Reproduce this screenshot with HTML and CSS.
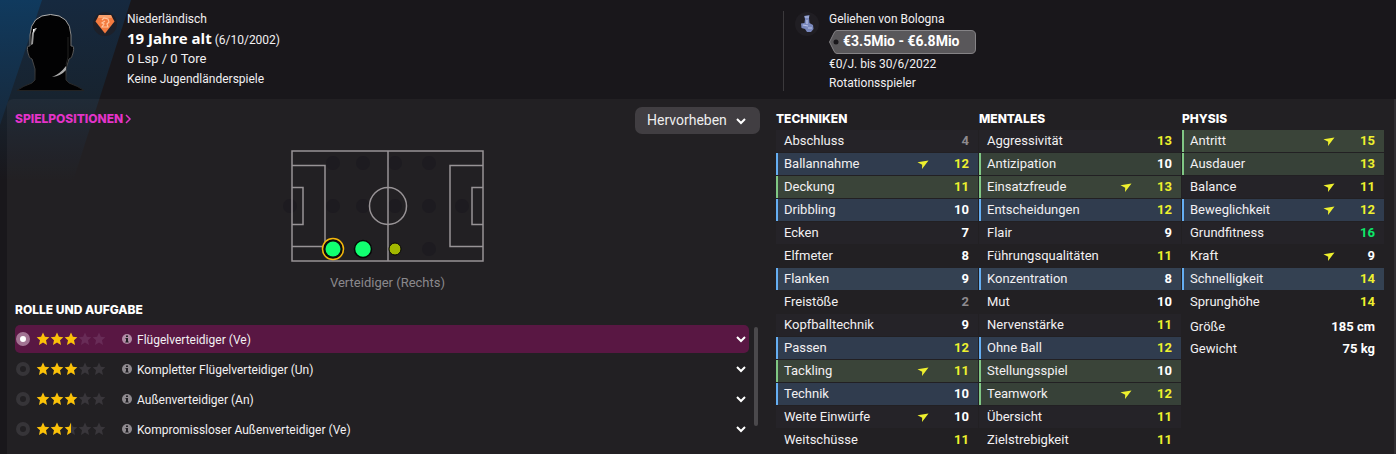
FILE: index.html
```html
<!DOCTYPE html>
<html lang="de">
<head>
    <meta charset="UTF-8">
    <meta name="viewport" content="width=device-width, initial-scale=1.0">
    <title>Spielerprofil</title>
    <link rel="stylesheet" href="styles.css">
</head>
<body>
    <svg class="symbols" aria-hidden="true">
        <symbol id="arrow" viewBox="0 0 12 12"><path d="M0.500 4.200 L11.500 2.500 L5 11 L5.200 6.800 Z"/></symbol>
        <symbol id="chevron" viewBox="0 0 12 12"><path d="M2 4 L6 8 L10 4" fill="none" stroke="#fff" stroke-width="2"/></symbol>
        <symbol id="star" viewBox="0 0 14 14"><path d="M7 .5 L8.900 4.700 L13.300 5.200 L10 8.300 L11 12.900 L7 10.600 L3 12.900 L4 8.300 L.7 5.200 L5.100 4.700 Z"/></symbol>
        <symbol id="half" viewBox="0 0 14 14"><path d="M7 .5 L7 10.600 L3 12.900 L4 8.300 L.7 5.200 L5.100 4.700 Z"/></symbol>
        <symbol id="stars" viewBox="0 0 70 14">
            <use href="#star" width="14" height="14"/><use href="#star" x="14" width="14" height="14"/><use href="#star" x="28" width="14" height="14"/><use href="#star" x="42" width="14" height="14"/><use href="#star" x="56" width="14" height="14"/>
        </symbol>
        <symbol id="info" viewBox="0 0 10 10"><circle cx="5" cy="5" r="5" fill="currentColor"/><path d="M4 1.500h2v1.500H4zM3.500 4H6v3.500h.700v1H3.300v-1H4V5h-.500z" fill="#222025"/></symbol>
    </svg>

    <header class="header">
        <div class="person">
            <svg class="portrait" viewBox="0 0 72 80">
                <defs>
                    <linearGradient id="rim" x1="0" y1="0" x2="0" y2="1">
                        <stop offset="0" stop-color="#b5b5b5"/>
                        <stop offset=".5" stop-color="#555"/>
                        <stop offset="1" stop-color="#222"/>
                    </linearGradient>
                </defs>
                <path d="M2 79.500 Q8 75 17 72 L20 69 L20 58 L17 48 Q14 48 13 42 Q11 34 15 35 L15 24 Q16 4 35.500 3.500 Q55 4 56 24 L56 35 Q60 34 58 42 Q57 48 54 48 L51 58 L51 69 L54 72 Q63 75 69 79.500 Z" fill="#020203" stroke="url(#rim)"/>
                <path d="M17 22 L20 17 L22 17 L19 22 L18 33 L16 34 Z" fill="#999"/>
                <path d="M18 18 L20 18 L18 22 Z" fill="#fff"/>
                <path d="M51 55 L51 59 Q46 65 37 66 Q45 63 51 55 Z" fill="#aaa"/>
                <path d="M53 26 L53 46 L51 54" fill="none" stroke="#222"/>
            </svg>
            <svg class="nation" viewBox="0 0 24 24">
                <circle cx="12" cy="12" r="12" fill="#1d2029"/>
                <path d="M6 3 L18 3 L21.500 9.500 L12 21.500 L2.500 9.500 Z" fill="#f47b3f"/>
                <path d="M6 3 L18 3 L19 6 L5 6 Z" fill="#f9a06c"/>
                <path d="M9 8 L11 6 L15 7 L16 10 L14 12 L15 15 L9 15 L11 12 L9 11 L12 9" fill="none" stroke="#ffc49b" stroke-width="1.200"/>
            </svg>
            <div class="lines">
                <p>Niederländisch</p>
                <p class="age"><strong>19 Jahre alt</strong> (6/10/2002)</p>
                <p class="caps">0 Lsp / 0 Tore</p>
                <p>Keine Jugendländerspiele</p>
            </div>
        </div>
        <div class="contract">
            <svg class="club" viewBox="0 0 24 24">
                <circle cx="12" cy="12" r="12" fill="#201e23"/>
                <path d="M9 4 L14.500 3 L14 6 L14.500 11 L18 13 L18.500 17 L16 20 L12 20 L10 17 L6.500 16 L6 11.500 L9.500 11 L10 7 Z" fill="#7988bd"/>
                <path d="M10 5 L14 5 M8 13 L13 14 M13 16 L17 16 M12 8 V12" stroke="#b9c3e6" stroke-width="1.200"/>
            </svg>
            <div class="lines">
                <p>Geliehen von Bologna</p>
                <div class="price">
                    <svg class="price-tag" viewBox="0 0 147 24" preserveAspectRatio="none">
                        <path d="M8 .5 H142 Q146.500 .5 146.500 5 V19 Q146.500 23.500 142 23.500 H8 Q6 23.500 5 21 L.5 12 L5 3 Q6 .5 8 .5 Z" fill="#59575a" stroke="#858386"/>
                        <circle cx="7" cy="12" r="2.500" fill="#19171b"/>
                    </svg>
                    <strong>€3.5Mio - €6.8Mio</strong>
                </div>
                <p>€0/J. bis 30/6/2022</p>
                <p>Rotationsspieler</p>
            </div>
        </div>
    </header>

    <main class="panel">
        <section class="positions">
            <div class="top">
                <a class="title" href="#">SPIELPOSITIONEN<svg viewBox="0 0 8 10"><path d="M2 1 L6 5 L2 9" fill="none" stroke="currentColor" stroke-width="1.500"/></svg></a>
                <div class="select">
                    <select aria-label="Hervorheben"><option>Hervorheben</option></select>
                    <svg><use href="#chevron"/></svg>
                </div>
            </div>
            <figure class="pitch">
                <svg viewBox="0 0 216 124">
                    <g fill="#1d1b20">
                        <circle cx="10" cy="60" r="7"/>
                        <circle cx="53" cy="17" r="7"/><circle cx="83" cy="17" r="7"/><circle cx="115" cy="17" r="7"/><circle cx="149" cy="17" r="7"/>
                        <circle cx="53" cy="60" r="7"/><circle cx="83" cy="60" r="7"/><circle cx="115" cy="60" r="7"/><circle cx="149" cy="60" r="7"/><circle cx="182" cy="60" r="7"/>
                        <circle cx="149" cy="103" r="7"/>
                    </g>
                    <g fill="none" stroke="#989396" stroke-width="1.500">
                        <rect x="12" y="5" width="191" height="110"/>
                        <path d="M108 5V115M12 19.500H45V100.500H12M12 41.500H23V78.500H12M203 19.500H170V100.500H203M203 41.500H192V78.500H203"/>
                        <circle cx="108" cy="60" r="18.500"/>
                    </g>
                    <circle cx="53" cy="103" r="10.500" fill="#0c0b0d" stroke="#f5b80c" stroke-width="1.500"/>
                    <circle cx="53" cy="103" r="7.500" fill="#11ff70"/>
                    <circle cx="83" cy="103" r="8.500" fill="#11ff70" stroke="#060606" stroke-width="1.500"/>
                    <circle cx="115" cy="103" r="6" fill="#a3b900" stroke="#060606"/>
                </svg>
                <figcaption>Verteidiger (Rechts)</figcaption>
            </figure>

            <h2>ROLLE UND AUFGABE</h2>
            <div class="roles">
                <div class="role-list">
                    <div class="role active">
                        <input type="radio" name="role" id="role1" checked>
                        <svg class="stars" viewBox="0 0 70 14"><use class="off" href="#stars"/><use href="#star" width="14" height="14"/><use href="#star" x="14" width="14" height="14"/><use href="#star" x="28" width="14" height="14"/></svg>
                        <svg class="info"><use href="#info"/></svg>
                        <label for="role1">Flügelverteidiger (Ve)</label>
                        <button aria-label="Aufgabe"><svg><use href="#chevron"/></svg></button>
                    </div>
                    <div class="role">
                        <input type="radio" name="role" id="role2">
                        <svg class="stars" viewBox="0 0 70 14"><use class="off" href="#stars"/><use href="#star" width="14" height="14"/><use href="#star" x="14" width="14" height="14"/><use href="#star" x="28" width="14" height="14"/></svg>
                        <svg class="info"><use href="#info"/></svg>
                        <label for="role2">Kompletter Flügelverteidiger (Un)</label>
                        <button aria-label="Aufgabe"><svg><use href="#chevron"/></svg></button>
                    </div>
                    <div class="role">
                        <input type="radio" name="role" id="role3">
                        <svg class="stars" viewBox="0 0 70 14"><use class="off" href="#stars"/><use href="#star" width="14" height="14"/><use href="#star" x="14" width="14" height="14"/><use href="#star" x="28" width="14" height="14"/></svg>
                        <svg class="info"><use href="#info"/></svg>
                        <label for="role3">Außenverteidiger (An)</label>
                        <button aria-label="Aufgabe"><svg><use href="#chevron"/></svg></button>
                    </div>
                    <div class="role">
                        <input type="radio" name="role" id="role4">
                        <svg class="stars" viewBox="0 0 70 14"><use class="off" href="#stars"/><use href="#star" width="14" height="14"/><use href="#star" x="14" width="14" height="14"/><use href="#half" x="28" width="14" height="14"/></svg>
                        <svg class="info"><use href="#info"/></svg>
                        <label for="role4">Kompromissloser Außenverteidiger (Ve)</label>
                        <button aria-label="Aufgabe"><svg><use href="#chevron"/></svg></button>
                    </div>
                </div>
                <div class="scrollbar"></div>
            </div>
        </section>

        <section class="attributes">
            <div class="group">
                <h2>TECHNIKEN</h2>
                <table>
                    <tr><th>Abschluss</th><td></td><td class="low">4</td></tr>
                    <tr class="blue"><th>Ballannahme</th><td><svg><use href="#arrow"/></svg></td><td class="good">12</td></tr>
                    <tr class="green"><th>Deckung</th><td></td><td class="good">11</td></tr>
                    <tr class="blue"><th>Dribbling</th><td></td><td>10</td></tr>
                    <tr><th>Ecken</th><td></td><td>7</td></tr>
                    <tr><th>Elfmeter</th><td></td><td>8</td></tr>
                    <tr class="blue"><th>Flanken</th><td></td><td>9</td></tr>
                    <tr><th>Freistöße</th><td></td><td class="low">2</td></tr>
                    <tr><th>Kopfballtechnik</th><td></td><td>9</td></tr>
                    <tr class="blue"><th>Passen</th><td></td><td class="good">12</td></tr>
                    <tr class="green"><th>Tackling</th><td><svg><use href="#arrow"/></svg></td><td class="good">11</td></tr>
                    <tr class="blue"><th>Technik</th><td></td><td>10</td></tr>
                    <tr><th>Weite Einwürfe</th><td><svg><use href="#arrow"/></svg></td><td>10</td></tr>
                    <tr><th>Weitschüsse</th><td></td><td class="good">11</td></tr>
                </table>
            </div>
            <div class="group">
                <h2>MENTALES</h2>
                <table>
                    <tr><th>Aggressivität</th><td></td><td class="good">13</td></tr>
                    <tr class="green"><th>Antizipation</th><td></td><td>10</td></tr>
                    <tr class="green"><th>Einsatzfreude</th><td><svg><use href="#arrow"/></svg></td><td class="good">13</td></tr>
                    <tr class="blue"><th>Entscheidungen</th><td></td><td class="good">12</td></tr>
                    <tr><th>Flair</th><td></td><td>9</td></tr>
                    <tr><th>Führungsqualitäten</th><td></td><td class="good">11</td></tr>
                    <tr class="blue"><th>Konzentration</th><td></td><td>8</td></tr>
                    <tr><th>Mut</th><td></td><td>10</td></tr>
                    <tr><th>Nervenstärke</th><td></td><td class="good">11</td></tr>
                    <tr class="blue"><th>Ohne Ball</th><td></td><td class="good">12</td></tr>
                    <tr class="green"><th>Stellungsspiel</th><td></td><td>10</td></tr>
                    <tr class="green"><th>Teamwork</th><td><svg><use href="#arrow"/></svg></td><td class="good">12</td></tr>
                    <tr><th>Übersicht</th><td></td><td class="good">11</td></tr>
                    <tr><th>Zielstrebigkeit</th><td></td><td class="good">11</td></tr>
                </table>
            </div>
            <div class="group">
                <h2>PHYSIS</h2>
                <table>
                    <tr class="green"><th>Antritt</th><td><svg><use href="#arrow"/></svg></td><td class="good">15</td></tr>
                    <tr class="green"><th>Ausdauer</th><td></td><td class="good">13</td></tr>
                    <tr><th>Balance</th><td><svg><use href="#arrow"/></svg></td><td class="good">11</td></tr>
                    <tr class="blue"><th>Beweglichkeit</th><td><svg><use href="#arrow"/></svg></td><td class="good">12</td></tr>
                    <tr><th>Grundfitness</th><td></td><td class="top-value">16</td></tr>
                    <tr><th>Kraft</th><td><svg><use href="#arrow"/></svg></td><td>9</td></tr>
                    <tr class="blue"><th>Schnelligkeit</th><td></td><td class="good">14</td></tr>
                    <tr><th>Sprunghöhe</th><td></td><td class="good">14</td></tr>
                </table>
                <table class="body-data">
                    <tr><th>Größe</th><td>185 cm</td></tr>
                    <tr><th>Gewicht</th><td>75 kg</td></tr>
                </table>
            </div>
        </section>
    </main>
</body>
</html>
```
FILE: styles.css
```css
* {
    box-sizing: border-box;
}
body {
    margin: 0;
    min-height: 100vh;
    display: flex;
    flex-direction: column;
    position: relative;
    background: #19171b;
    color: #f2f0f2;
    font-family: Roboto, 'Liberation Sans', sans-serif;
    font-size: 12px;
}
/* slanted club colours behind the portrait */
body::before,
body::after {
    content: '';
    position: absolute;
    z-index: -1;
    top: 0;
    left: 0;
    width: 131px;
    height: 180px;
    background: linear-gradient(#16293f, #17232f 55%, #19171b);
    clip-path: polygon(0 0, 100% 0, 56% 100%, 0 100%);
}
body::after {
    width: 42px;
    height: 125px;
    background: linear-gradient(#103a5e, #17293c);
    clip-path: polygon(0 0, 100% 0, 0 100%);
}
p,
h2,
figure {
    margin: 0;
}
.symbols {
    position: absolute;
    width: 0;
    height: 0;
}
.header {
    display: grid;
    grid-template-columns: 1fr 613px;
    height: 99px;
    padding-top: 9px;
}
.person,
.contract {
    display: flex;
    align-items: flex-start;
}
.person {
    padding-left: 15px;
}
.portrait {
    width: 72px;
    height: 80px;
    margin-top: 2px;
}
.nation,
.club {
    width: 24px;
    height: 24px;
    margin-top: 3px;
}
.nation {
    margin: 3px 10px 0 6px;
}
.contract {
    height: 80px;
    margin-top: 2px;
    padding-left: 11px;
    border-left: 1px solid #3b393c;
}
.club {
    margin: 1px 10px 0 0;
}
.lines p {
    line-height: 20px;
}
.lines strong {
    font-family: 'Open Sans', sans-serif;
    font-size: 15px;
    color: #fff;
}
.lines .age {
    height: 20px;
    line-height: 19px;
}
.lines .caps {
    font-size: 13px;
}
.contract .lines {
    margin-top: -2px;
}
.contract .lines p:last-child {
    line-height: 18px;
}
.price {
    position: relative;
    width: 147px;
    height: 24px;
    margin-top: 1px;
    padding-left: 14px;
}
.price-tag {
    position: absolute;
    inset: 0;
    width: 100%;
    height: 100%;
}
.price strong {
    position: relative;
    font-family: Roboto, sans-serif;
    font-size: 14px;
    line-height: 22px;
}
.panel {
    flex: 1;
    display: grid;
    grid-template-columns: 1fr 608px;
    gap: 16px;
    margin-left: 7px;
    padding: 8px 10px 1px 8px;
    background: rgba(255, 255, 255, 0.04);
    border-right: 2px solid #302e32;
    border-radius: 6px 0 0 0;
}
h2,
.title {
    font-family: Inter, sans-serif;
    font-size: 12px;
    font-weight: 800;
    line-height: 20px;
    color: #fff;
}
.top {
    display: flex;
    justify-content: space-between;
}
.title {
    margin-top: 2px;
    color: #e333c8;
    text-decoration: none;
}
.title svg {
    width: 8px;
    height: 10px;
    margin-left: 1px;
    vertical-align: -1px;
}
.select {
    position: relative;
}
.select select {
    display: block;
    appearance: none;
    width: 125px;
    height: 27px;
    padding: 0 12px 2px;
    border: 0;
    border-radius: 7px;
    background: #413e42;
    color: #eee;
    font: 14px Roboto, sans-serif;
}
.select svg {
    position: absolute;
    right: 13px;
    top: 8px;
    width: 12px;
    height: 12px;
    pointer-events: none;
}
.pitch {
    display: flex;
    flex-direction: column;
    align-items: center;
    margin: 12px 0 5px;
}
.pitch svg {
    width: 216px;
    height: 124px;
}
.pitch figcaption {
    margin-top: 1px;
    font-size: 13px;
    line-height: 24px;
    color: #8b888c;
}
.roles {
    display: flex;
    margin-top: 5px;
}
.role-list {
    flex: 1;
    display: grid;
    gap: 2px;
}
.role {
    display: flex;
    align-items: center;
    height: 28px;
    padding: 0 2px 0 1px;
    border-radius: 5px;
}
.role.active {
    background: #591743;
}
.role input {
    appearance: none;
    width: 14px;
    height: 14px;
    margin: 0 6px 0 0;
    border: 4px solid #363438;
    border-radius: 50%;
}
.role input:checked {
    border-color: #a27493;
    background: #fff;
}
.stars {
    width: 70px;
    height: 14px;
    fill: #fbc108;
}
.stars .off {
    fill: #39363b;
}
.active .stars .off {
    fill: #682c57;
}
.info {
    width: 10px;
    height: 10px;
    margin: 0 5px 0 16px;
    color: #8f8a8f;
}
.active .info {
    color: #b18ba5;
}
.role label {
    flex: 1;
    padding-top: 1px;
}
.role button {
    width: 12px;
    height: 12px;
    padding: 0;
    border: 0;
    background: none;
}
.role button svg {
    display: block;
    width: 12px;
    height: 12px;
}
.scrollbar {
    width: 4px;
    height: 99px;
    margin: 2px 2px 0 5px;
    border-radius: 2px;
    background: #4b494c;
}
.attributes {
    display: grid;
    grid-template-columns: repeat(3, 1fr);
    gap: 1px;
    padding-top: 2px;
}
table {
    width: 100%;
    table-layout: fixed;
    border-spacing: 0 1px;
    font-size: 13px;
    line-height: 20px;
}
th,
td {
    height: 22px;
    padding: 0 0 1px;
}
th {
    padding-left: 6px;
    border-left: 2px solid transparent;
    text-align: left;
    font-weight: 400;
}
td {
    width: 40px;
    padding-right: 9px;
    text-align: right;
    font-weight: 700;
    color: #fff;
}
td svg {
    display: block;
    width: 12px;
    height: 12px;
    margin-left: auto;
    fill: #eef02e;
}
tr:nth-child(odd) {
    background: #252328;
}
tr.blue {
    background: #303c4e;
}
.blue:nth-child(odd) {
    background: #344152;
}
.blue th {
    border-color: #65aef2;
}
tr.green {
    background: #374138;
}
.green:nth-child(odd) {
    background: #3a4439;
}
.green th {
    border-color: #80c784;
}
.low {
    color: #8d8a8e;
}
.good {
    color: #eef02e;
}
.top-value {
    color: #0de768;
}
.body-data {
    margin-top: 2px;
    border-spacing: 0;
}
.body-data tr:nth-child(odd) {
    background: none;
}
.body-data td {
    width: 80px;
}
```
